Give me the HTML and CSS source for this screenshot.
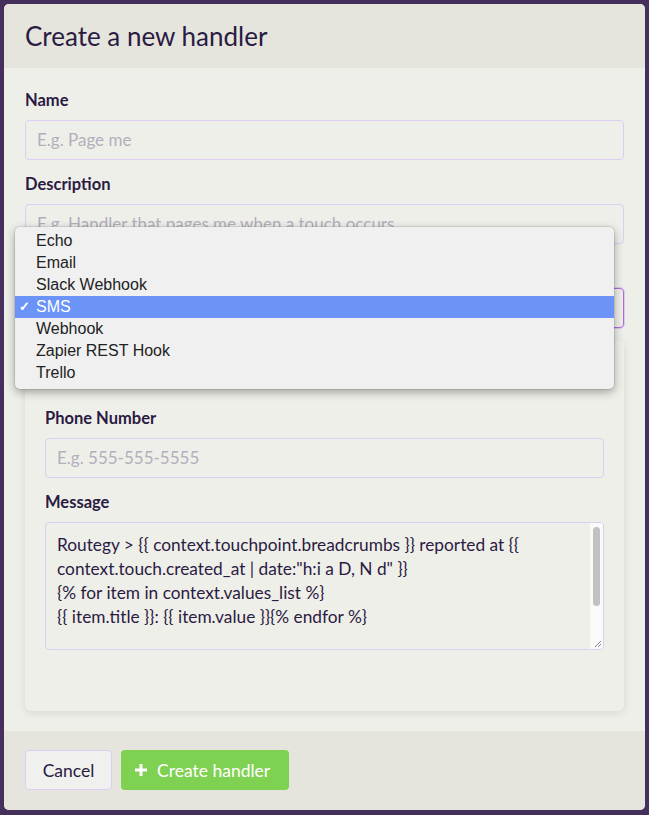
FILE: index.html
```html
<!DOCTYPE html>
<html>
<head>
<meta charset="utf-8">
<link rel="stylesheet" href="styles.css">
</head>
<body>
<div class="modal">
  <div class="modal-header">
    <h1 class="title">Create a new handler</h1>
  </div>
  <div class="modal-body">
    <div class="field">
      <label class="label">Name</label>
      <input class="input" type="text" placeholder="E.g. Page me">
    </div>
    <div class="field">
      <label class="label">Description</label>
      <input class="input" type="text" placeholder="E.g. Handler that pages me when a touch occurs">
    </div>
    <div class="select-wrap">
      <div class="select"></div>
      <ul class="dropdown">
        <li class="opt">Echo</li>
        <li class="opt">Email</li>
        <li class="opt">Slack Webhook</li>
        <li class="opt selected"><span class="check">✓</span>SMS</li>
        <li class="opt">Webhook</li>
        <li class="opt">Zapier REST Hook</li>
        <li class="opt">Trello</li>
      </ul>
    </div>
    <div class="card">
      <div class="field">
        <label class="label">Phone Number</label>
        <input class="input" type="text" placeholder="E.g. 555-555-5555">
      </div>
      <div class="field">
        <label class="label">Message</label>
        <div class="textarea-wrap">
          <textarea class="textarea">Routegy &gt; {{ context.touchpoint.breadcrumbs }} reported at {{ context.touch.created_at | date:"h:i a D, N d" }}
{% for item in context.values_list %}
{{ item.title }}: {{ item.value }}{% endfor %}</textarea>
          <div class="scrollbar"><div class="thumb"></div></div>
          <svg class="grip" width="8" height="8" viewBox="0 0 8 8"><path d="M7 1L1 7M7 4L4 7" stroke="#888" stroke-width="1" fill="none"/></svg>
        </div>
      </div>
    </div>
  </div>
  <div class="modal-footer">
    <button class="btn btn-cancel">Cancel</button>
    <button class="btn btn-primary"><svg class="plus" width="14" height="14" viewBox="0 0 14 14"><path d="M7 1v12M1 7h12" stroke="#fff" stroke-width="3" fill="none"/></svg>Create handler</button>
  </div>
</div>
</body>
</html>
```
FILE: styles.css
```css
* { box-sizing: border-box; }
html, body { margin: 0; padding: 0; }
body {
  background: #452f5c;
  font-family: Lato, "Open Sans", sans-serif;
  color: #2b1b42;
  width: 649px;
  height: 815px;
  overflow: hidden;
}
.modal {
  margin: 4px 4px 0 4px;
  height: 806px;
  background: #efefea;
  border-radius: 5px;
  overflow: hidden;
  display: flex;
  flex-direction: column;
}
.modal-header {
  height: 64px;
  background: #e5e5de;
  display: flex;
  align-items: center;
  padding: 0 21px;
}
.title {
  margin: 0;
  font-weight: 400;
  font-size: 26px;
  color: #2b1b42;
}
.modal-body {
  flex: 1;
  padding: 23px 21px 20px 21px;
  display: flex;
  flex-direction: column;
}
.field {
  display: flex;
  flex-direction: column;
  margin-bottom: 15px;
}
.label {
  font-weight: 700;
  font-size: 16.5px;
  line-height: 18px;
  margin-bottom: 11px;
  color: #2b1b42;
}
.input {
  height: 40px;
  border: 1px solid #dccdf2;
  border-radius: 4px;
  background: #efefea;
  padding: 0 11px;
  font-family: Lato, sans-serif;
  font-size: 17px;
  color: #2b1b42;
  outline: none;
}
.input::placeholder { color: #b3aebb; }
.select-wrap {
  position: relative;
  margin-top: 29px;
  margin-bottom: 12px;
}
.select {
  height: 40px;
  border: 1px solid #b36bd8;
  border-radius: 4px;
  box-shadow: 0 0 0 1px #e4c7f0;
}
.dropdown {
  position: absolute;
  left: -10px;
  top: -61px;
  width: 599px;
  margin: 0;
  padding: 3px 0 5px 0;
  list-style: none;
  background: #f0f0f0;
  border-radius: 5px;
  box-shadow: 0 3px 10px rgba(0,0,0,0.35), 0 0 0 1px rgba(0,0,0,0.08);
  font-family: "Liberation Sans", Arial, sans-serif;
  font-size: 16px;
  color: #222;
  z-index: 10;
}
.opt {
  height: 22px;
  line-height: 22px;
  padding-left: 21px;
  position: relative;
}
.opt.selected {
  background: #6c93f8;
  color: #fff;
}
.check {
  position: absolute;
  left: 4px;
  top: 0;
  font-size: 13px;
  font-weight: 700;
}
.card {
  background: #efefea;
  border-radius: 6px;
  box-shadow: 0 2px 8px rgba(0,0,0,0.10);
  padding: 69px 20px 46px 20px;
  display: flex;
  flex-direction: column;
}
.textarea-wrap {
  position: relative;
  height: 128px;
}
.textarea {
  display: block;
  width: 100%;
  height: 128px;
  border: 1px solid #dccdf2;
  border-radius: 4px;
  background: #efefea;
  padding: 10px 30px 0 11px;
  font-family: Lato, sans-serif;
  font-size: 17.3px;
  line-height: 24px;
  color: #2b1b42;
  resize: none;
  overflow: hidden;
  outline: none;
}
.scrollbar {
  position: absolute;
  right: 1px;
  top: 1px;
  bottom: 1px;
  width: 14px;
  background: #fafafa;
  border-left: 1px solid #ececec;
  border-radius: 0 3px 3px 0;
}
.thumb {
  margin: 4px 3px 0 3px;
  height: 79px;
  background: #c1c1c1;
  border-radius: 4px;
}
.grip {
  position: absolute;
  right: 2px;
  bottom: 2px;
  background: #fafafa;
}
.modal-footer {
  height: 80px;
  background: #e5e5de;
  display: flex;
  align-items: center;
  gap: 9px;
  padding: 0 21px;
}
.btn {
  height: 40px;
  border-radius: 4px;
  font-family: Lato, sans-serif;
  font-size: 17.5px;
  display: flex;
  align-items: center;
  cursor: pointer;
}
.btn-cancel {
  width: 87px;
  justify-content: center;
  background: #f0f0ee;
  border: 1px solid #dccdf2;
  color: #2b1b42;
}
.btn-primary {
  width: 168px;
  background: #7fd152;
  border: none;
  color: #fff;
  padding: 0 0 0 13px;
  gap: 9px;
}
.plus { display: block; }
```
